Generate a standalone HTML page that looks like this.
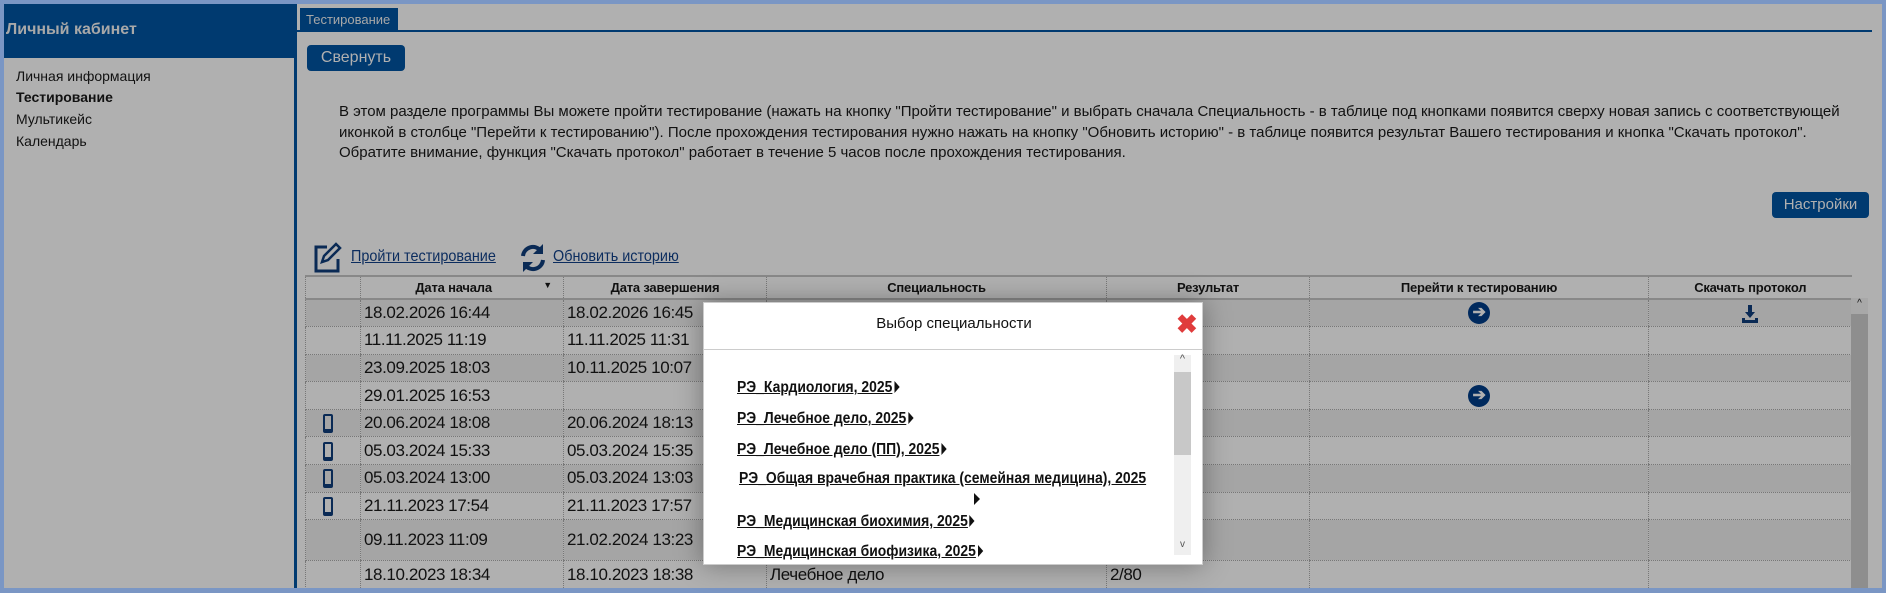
<!DOCTYPE html>
<html><head><meta charset="utf-8"><style>
*{box-sizing:border-box;margin:0;padding:0}
body{width:1886px;height:593px;overflow:hidden;background:#7a96c4;font-family:"Liberation Sans",sans-serif;color:#111;position:relative}
.a{position:absolute}
.bg{left:4px;top:4px;width:1878px;height:584px;background:#b0b0b0}
.side{left:4px;top:4px;width:290px;height:584px;background:#b0b0b0}
.sh{left:4px;top:4px;width:290px;height:54px;background:#003a70;color:#a8a8a8;font-weight:bold;font-size:16px;padding:17px 0 0 2px}
.vl{left:294px;top:4px;width:3px;height:584px;background:#003a70}
.si{left:16px;font-size:14px;color:#111}
.tab{left:300px;top:8px;width:98px;height:23px;background:#003a70;color:#a8a8a8;font-size:13px;padding:4px 0 0 6px}
.tl{left:297px;top:30px;width:1575px;height:2px;background:#003a70}
.btn{background:#003a70;color:#b0b0b0;border-radius:4px;font-size:16px;text-align:center}
.p{left:339px;top:102px;font-size:15px;line-height:20.5px;color:#111;width:1520px}
.lnk{color:#0b2c5e;text-decoration:underline;font-size:16px;transform:scaleX(.9);transform-origin:left}
table{border-collapse:collapse;position:absolute;left:305px;top:275px;width:1546px;table-layout:fixed}
td,th{border-left:1px dotted #777;border-bottom:1px dotted #777;font-size:17px;height:27.6px;padding:0 3px;white-space:nowrap;overflow:hidden;letter-spacing:-0.4px}
th{font-size:13px;font-weight:bold;height:23px;border-top:2px solid #888;border-bottom:2px solid #888;letter-spacing:-0.2px}
tr.d td{background:#a5a5a5}
.ph{display:inline-block;width:10px;height:19px;border:2.5px solid #0a2a55;border-bottom-width:4px;border-radius:2px;vertical-align:middle;margin-left:14px}
.go{display:inline-block;width:22px;height:22px;border-radius:50%;background:#002a5e;color:#b0b0b0;font-size:16px;line-height:22px;text-align:center;font-weight:bold}
.modal{left:703px;top:302px;width:500px;height:263px;background:#fff;border:1px solid #ccc;box-shadow:0 0 25px rgba(0,0,0,.35)}
.mi{position:absolute;left:33px;font-size:16px;font-weight:bold;text-decoration:underline;color:#111;white-space:nowrap;transform:scaleX(.87);transform-origin:left}
.tri{display:inline-block;width:0;height:0;border-left:6px solid #111;border-top:6px solid transparent;border-bottom:6px solid transparent;margin-left:2px;vertical-align:-1px}
</style></head><body>
<div class="a bg"></div>
<div class="a side"></div>
<div class="a sh">Личный кабинет</div>
<div class="a vl"></div>
<div class="a si" style="top:68px">Личная информация</div>
<div class="a si" style="top:89px;font-weight:bold">Тестирование</div>
<div class="a si" style="top:111px">Мультикейс</div>
<div class="a si" style="top:133px">Календарь</div>
<div class="a tab">Тестирование</div>
<div class="a tl"></div>
<div class="a btn" style="left:307px;top:45px;width:98px;height:26px;padding-top:4px">Свернуть</div>
<div class="a p">В этом разделе программы Вы можете пройти тестирование (нажать на кнопку "Пройти тестирование" и выбрать сначала Специальность - в таблице под кнопками появится сверху новая запись с соответствующей иконкой в столбце "Перейти к тестированию"). После прохождения тестирования нужно нажать на кнопку "Обновить историю" - в таблице появится результат Вашего тестирования и кнопка "Скачать протокол".<br>Обратите внимание, функция "Скачать протокол" работает в течение 5 часов после прохождения тестирования.</div>
<div class="a btn" style="left:1772px;top:192px;width:97px;height:26px;padding-top:4px;font-size:15px">Настройки</div>
<svg class="a" style="left:313px;top:242px" width="30" height="32" viewBox="0 0 30 32"><path d="M14 5H3v24h22V17" fill="none" stroke="#0a2a55" stroke-width="3"/><path d="M23 2l4 4-12 12-6 2 2-6z" fill="none" stroke="#0a2a55" stroke-width="2.5"/></svg>
<div class="a lnk" style="left:351px;top:248px">Пройти тестирование</div>
<svg class="a" style="left:519px;top:242px" width="28" height="32" viewBox="0 0 28 32"><path d="M4 14A10 10 0 0 1 22 9" fill="none" stroke="#0a2a55" stroke-width="4"/><path d="M24 2v10h-10z" fill="#0a2a55"/><path d="M24 18A10 10 0 0 1 6 23" fill="none" stroke="#0a2a55" stroke-width="4"/><path d="M4 30V20h10z" fill="#0a2a55"/></svg>
<div class="a lnk" style="left:553px;top:248px">Обновить историю</div>
<table>
<colgroup><col style="width:55px"><col style="width:203px"><col style="width:203px"><col style="width:340px"><col style="width:203px"><col style="width:339px"><col style="width:203px"></colgroup>
<tr><th></th><th>Дата начала <span style="float:right;font-size:9px;margin-right:8px">▼</span></th><th>Дата завершения</th><th>Специальность</th><th>Результат</th><th>Перейти к тестированию</th><th>Скачать протокол</th></tr>
<tr class="d"><td></td><td>18.02.2026 16:44</td><td>18.02.2026 16:45</td><td></td><td></td><td style="text-align:center"><span class="go">➔</span></td><td style="text-align:center"><svg width="16" height="18" viewBox="0 0 16 18" style="vertical-align:middle"><path d="M6 0h4v7h3l-5 6-5-6h3z" fill="#0a2a55"/><path d="M0 13h3v2h10v-2h3v5H0z" fill="#0a2a55"/></svg></td></tr>
<tr><td></td><td>11.11.2025 11:19</td><td>11.11.2025 11:31</td><td></td><td></td><td></td><td></td></tr>
<tr class="d"><td></td><td>23.09.2025 18:03</td><td>10.11.2025 10:07</td><td></td><td></td><td></td><td></td></tr>
<tr><td></td><td>29.01.2025 16:53</td><td></td><td></td><td></td><td style="text-align:center"><span class="go">➔</span></td><td></td></tr>
<tr class="d"><td><span class="ph"></span></td><td>20.06.2024 18:08</td><td>20.06.2024 18:13</td><td></td><td></td><td></td><td></td></tr>
<tr><td><span class="ph"></span></td><td>05.03.2024 15:33</td><td>05.03.2024 15:35</td><td></td><td></td><td></td><td></td></tr>
<tr class="d"><td><span class="ph"></span></td><td>05.03.2024 13:00</td><td>05.03.2024 13:03</td><td></td><td></td><td></td><td></td></tr>
<tr><td><span class="ph"></span></td><td>21.11.2023 17:54</td><td>21.11.2023 17:57</td><td></td><td></td><td></td><td></td></tr>
<tr class="d"><td style="height:41px"></td><td>09.11.2023 11:09</td><td>21.02.2024 13:23</td><td></td><td></td><td></td><td></td></tr>
<tr><td></td><td>18.10.2023 18:34</td><td>18.10.2023 18:38</td><td>Лечебное дело</td><td>2/80</td><td></td><td></td></tr>
</table>
<div class="a" style="left:1851px;top:298px;width:17px;height:290px;background:#8e8e8e"></div>
<div class="a" style="left:1851px;top:298px;width:17px;height:16px;background:#a8a8a8;font-size:10px;text-align:center">^</div>
<div class="a" style="left:0;top:588px;width:1886px;height:5px;background:#7a96c4"></div>
<div class="a modal">
<div class="a" style="left:0;top:12px;width:500px;text-align:center;font-size:15px">Выбор специальности</div>
<div class="a" style="left:472px;top:6px;color:#e03c3c;font-size:26px;font-weight:bold">✖</div>
<div class="a" style="left:0;top:46px;width:498px;height:1px;background:#ccc"></div>
<div class="a" style="left:0;top:48px;width:498px;height:214px;overflow:hidden">
<div class="mi" style="top:28px">РЭ_Кардиология, 2025<span class="tri"></span></div>
<div class="mi" style="top:59px">РЭ_Лечебное дело, 2025<span class="tri"></span></div>
<div class="mi" style="top:90px">РЭ_Лечебное дело (ПП), 2025<span class="tri"></span></div>
<div class="mi" style="top:119px;left:35px">РЭ_Общая врачебная практика (семейная медицина), 2025</div>
<div class="a" style="left:268px;top:140px"><span class="tri"></span></div>
<div class="mi" style="top:162px">РЭ_Медицинская биохимия, 2025<span class="tri"></span></div>
<div class="mi" style="top:192px">РЭ_Медицинская биофизика, 2025<span class="tri"></span></div>
<div class="a" style="left:470px;top:4px;width:17px;height:200px;background:#efefef"></div>
<div class="a" style="left:470px;top:21px;width:17px;height:83px;background:#c8c8c8"></div>
<div class="a" style="left:470px;top:2px;width:17px;font-size:11px;text-align:center;color:#555">^</div>
<div class="a" style="left:470px;top:188px;width:17px;font-size:10px;text-align:center;color:#555">v</div>
</div>
</div>
</body></html>
